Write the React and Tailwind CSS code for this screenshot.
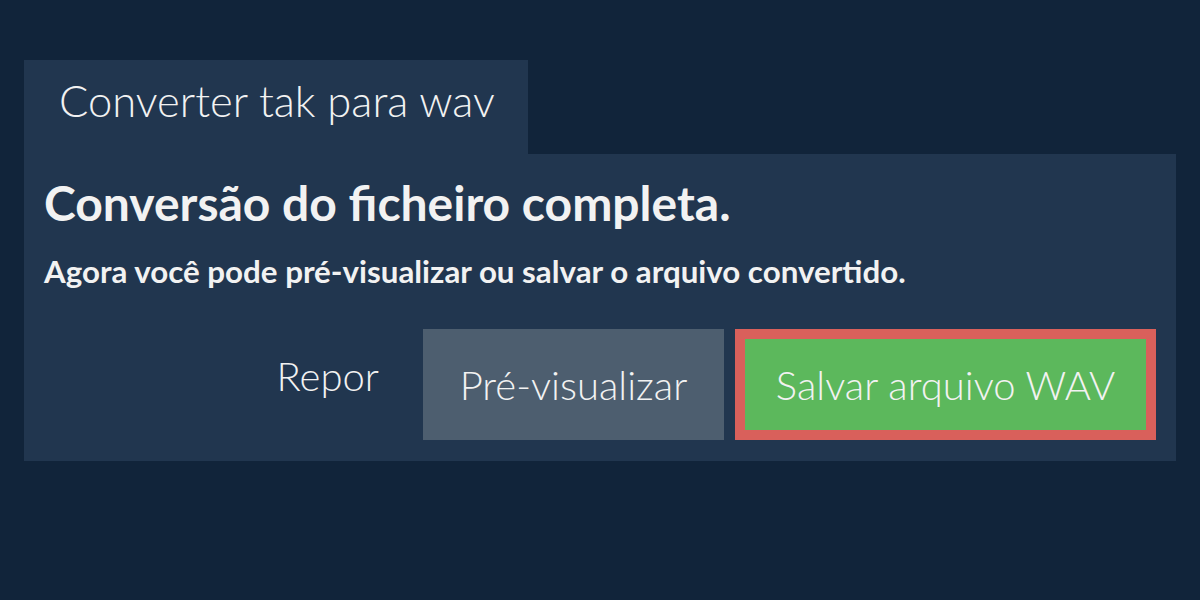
export default function App() {
  return (
    <div className="w-full min-h-[600px] bg-[#11243a] pt-[60px] px-[24px] font-['Lato','Liberation_Sans',sans-serif] text-[#f2f2f2]">
      {/* Tab */}
      <div className="w-[504px] h-[94px] bg-[#21364f] flex items-center pl-[35px] pb-[12px]">
        <h1 className="text-[43.5px] font-light leading-none">Converter tak para wav</h1>
      </div>

      {/* Panel */}
      <div className="bg-[#21364f] px-[20px] pt-[23px] pb-[21px]">
        <h2 className="text-[48px] font-bold leading-[52px]">Conversão do ficheiro completa.</h2>
        <p className="mt-[24px] text-[31.3px] font-bold leading-[36px]">
          Agora você pode pré-visualizar ou salvar o arquivo convertido.
        </p>

        <div className="mt-[40px] flex justify-end items-stretch gap-[11px]">
          <button className="px-[24px] text-[40px] font-light leading-none pb-[18px] mr-[9px]">Repor</button>
          <button className="w-[301px] h-[111px] bg-[#4d5e6f] text-[40px] font-light leading-none">
            Pré-visualizar
          </button>
          <button className="w-[421px] h-[111px] border-[10px] border-[#d9605b] bg-[#5cb85c] text-[40px] font-light leading-none">
            Salvar arquivo WAV
          </button>
        </div>
      </div>
    </div>
  )
}
